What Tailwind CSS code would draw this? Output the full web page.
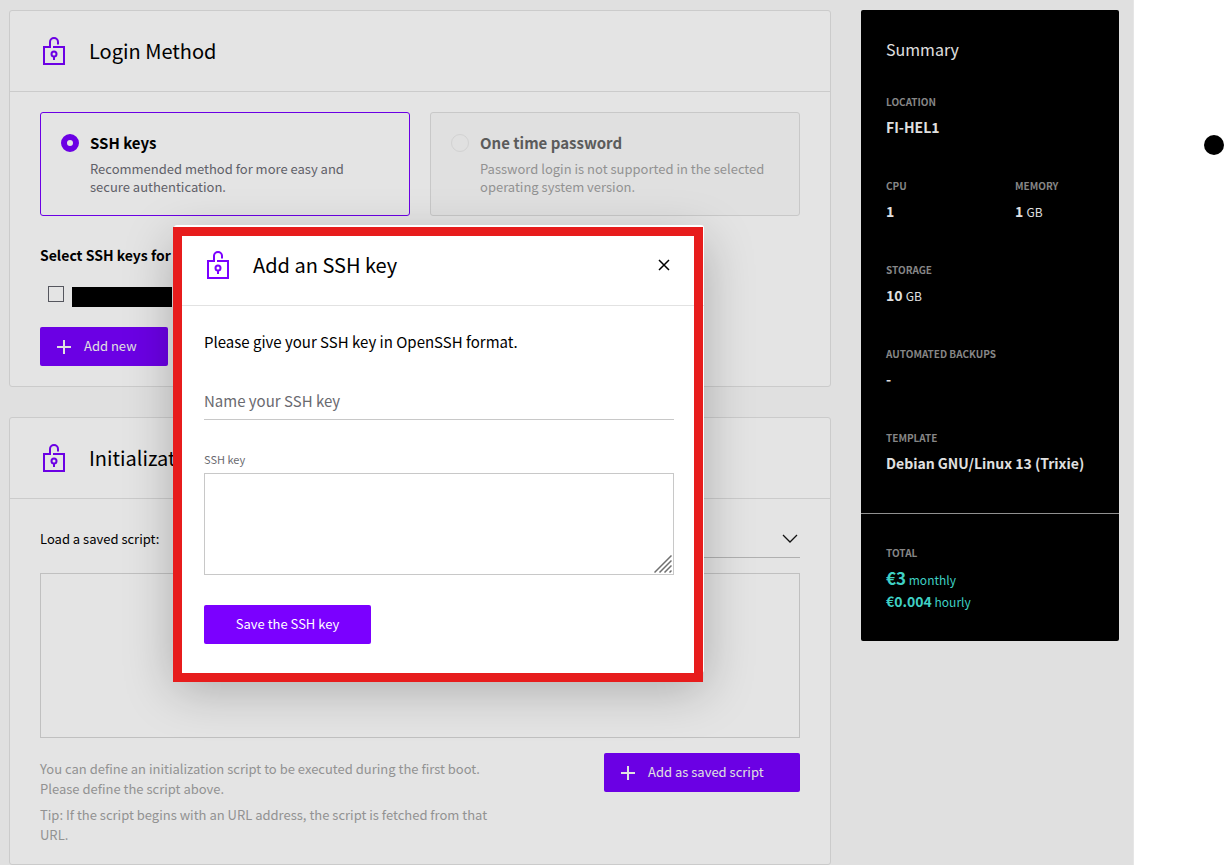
<!DOCTYPE html>
<html lang="en">
<head>
<meta charset="utf-8">
<meta name="viewport" content="width=device-width, initial-scale=1">
<title>Deploy server</title>
<script src="https://cdn.jsdelivr.net/npm/@tailwindcss/browser@4"></script>
</head>
<body class="bg-white font-['Noto_Sans_CJK_JP','Source_Sans_Pro',sans-serif] text-sm text-black">
<svg class="hidden" aria-hidden="true">
  <symbol id="lock" viewBox="0 0 24 30">
    <g fill="none" stroke="currentColor" stroke-width="2">
      <path d="M9 11H2V28H22V11H11"/>
      <path d="M8 11V6A4 4 0 0 1 16 6V8.500"/>
      <circle cx="12" cy="18" r="2.500"/>
      <path d="M12 20.500V24"/>
    </g>
  </symbol>
  <symbol id="plus" viewBox="0 0 14 14"><path d="M7 0V14M0 7H14" fill="none" stroke="currentColor" stroke-width="2"/></symbol>
</svg>
<div class="relative flex min-h-screen">
  <div class="flex flex-1 items-start gap-[30px] border-r border-[#e6e6e6] bg-[#e0e0e0] pt-[10px] pr-[14px] pl-[9px]">
    <main class="flex flex-1 flex-col gap-[30px]">
      <section class="rounded-[3px] border border-[#cbcbcb] bg-[#e4e4e4]">
        <header class="flex h-[81px] items-center gap-[23px] border-b border-[#cbcbcb] px-8">
          <svg class="h-[30px] w-6 text-[#6b00e4]"><use href="#lock"/></svg>
          <h2 class="text-xl leading-7">Login Method</h2>
        </header>
        <div class="flex flex-col px-[30px] py-5">
          <div class="grid grid-cols-2 gap-5">
            <label class="flex gap-[11px] rounded-[3px] border border-[#6b00e4] px-5 py-[19px]">
              <input type="radio" name="login" checked class="mt-[2px] size-[18px] shrink-0 appearance-none rounded-full border-[6px] border-[#6b00e4] bg-[#e4e4e4]">
              <span>
                <span class="block text-[15px] leading-[22px] font-bold">SSH keys</span>
                <span class="mt-[6px] block max-w-[280px] text-[13px] leading-[18px] text-[#5f6068]">Recommended method for more easy and secure authentication.</span>
              </span>
            </label>
            <label class="flex gap-[11px] rounded-[3px] border border-[#c8c8c8] bg-[#e0e0e0] px-5 py-[19px]">
              <input type="radio" name="login" disabled class="mt-[2px] size-[18px] shrink-0 appearance-none rounded-full border border-[#d2d2d2]">
              <span>
                <span class="block text-[15px] leading-[22px] font-bold text-[#5b5b5b]">One time password</span>
                <span class="mt-[6px] block text-[13px] leading-[18px] text-[#929292]">Password login is not supported in the selected operating system version.</span>
              </span>
            </label>
          </div>
          <h3 class="mt-[27px] text-sm leading-6 font-bold">Select SSH keys for</h3>
          <label class="mt-[15px] ml-2 flex h-6 items-center gap-2">
            <input type="checkbox" aria-label="SSH key" class="size-4 appearance-none border border-[#55565e]">
            <span class="mt-[6px] h-5 w-[100px] bg-black"></span>
          </label>
          <button class="mt-[21px] flex h-[39px] w-32 items-center gap-[13px] rounded-[2px] bg-[#6b00e4] pl-[17px] text-[13px] text-[#e0e0e0]"><svg class="size-[14px]"><use href="#plus"/></svg>Add new</button>
        </div>
      </section>

      <section class="rounded-[3px] border border-[#cbcbcb] bg-[#e4e4e4]">
        <header class="flex h-[81px] items-center gap-[23px] border-b border-[#cbcbcb] px-8">
          <svg class="h-[30px] w-6 text-[#6b00e4]"><use href="#lock"/></svg>
          <h2 class="text-xl leading-7">Initializat</h2>
        </header>
        <div class="flex flex-col px-[30px] pt-5 pb-[19px]">
          <div class="flex h-[39px] items-center gap-4">
            <label for="saved" class="pt-[2px] text-[13px]">Load a saved script:</label>
            <div class="relative h-full flex-1">
              <select id="saved" class="h-full w-full appearance-none border-b border-[#b0b0b0]"></select>
              <svg class="pointer-events-none absolute top-[15px] right-[2px] h-[9px] w-4" viewBox="0 0 16 9" fill="none" stroke="#111" stroke-width="1.300"><path d="M1 1L8 8L15 1"/></svg>
            </div>
          </div>
          <textarea aria-label="Initialization script" class="mt-[15px] h-[165px] w-full resize-none border border-[#c0c0c0]"></textarea>
          <div class="mt-[15px] flex items-start justify-between">
            <div class="w-[472px] pt-[6px] text-[13px] leading-5 text-[#929292]">
              <p>You can define an initialization script to be executed during the first boot. Please define the script above.</p>
              <p class="mt-[6px]">Tip: If the script begins with an URL address, the script is fetched from that URL.</p>
            </div>
            <button class="flex h-[39px] w-[196px] items-center gap-[13px] rounded-[2px] bg-[#6b00e4] pl-[17px] text-[13px] text-[#e0e0e0]"><svg class="size-[14px]"><use href="#plus"/></svg>Add as saved script</button>
          </div>
        </div>
      </section>
    </main>

    <aside class="w-[258px] shrink-0 rounded-[2px] bg-black text-[#e0e0e0]">
      <div class="px-[25px] pt-[27px] pb-[39px]">
        <h2 class="text-base leading-6">Summary</h2>
        <dl class="mt-[31px] grid grid-cols-[129px_1fr] gap-y-[38px]">
          <div class="col-span-2"><dt class="text-[10px] leading-5 font-bold text-[#868686]">LOCATION</dt><dd class="mt-1 text-sm leading-[22px] font-bold">FI-HEL1</dd></div>
          <div><dt class="text-[10px] leading-5 font-bold text-[#868686]">CPU</dt><dd class="mt-1 text-sm leading-[22px] font-bold">1</dd></div>
          <div><dt class="text-[10px] leading-5 font-bold text-[#868686]">MEMORY</dt><dd class="mt-1 text-sm leading-[22px] font-bold">1 <span class="text-xs font-normal">GB</span></dd></div>
          <div class="col-span-2"><dt class="text-[10px] leading-5 font-bold text-[#868686]">STORAGE</dt><dd class="mt-1 text-sm leading-[22px] font-bold">10 <span class="text-xs font-normal">GB</span></dd></div>
          <div class="col-span-2"><dt class="text-[10px] leading-5 font-bold text-[#868686]">AUTOMATED BACKUPS</dt><dd class="mt-1 text-sm leading-[22px] font-bold">-</dd></div>
          <div class="col-span-2"><dt class="text-[10px] leading-5 font-bold text-[#868686]">TEMPLATE</dt><dd class="mt-1 text-sm leading-[22px] font-bold whitespace-nowrap">Debian GNU/Linux 13 (Trixie)</dd></div>
        </dl>
      </div>
      <div class="border-t border-[#909090] px-[25px] pt-[29px] pb-[29px]">
        <h3 class="text-[10px] leading-5 font-bold text-[#868686]">TOTAL</h3>
        <p class="mt-1 text-xs leading-[22px] text-[#3fd0c4]"><b class="text-[17px] leading-[22px]">€3</b> monthly</p>
        <p class="text-xs leading-5 text-[#3fd0c4]"><b class="text-sm leading-5">€0.004</b> hourly</p>
      </div>
    </aside>
  </div>
  <div class="flex w-[90px] shrink-0 justify-end pt-[135px]"><span class="size-5 rounded-full bg-black"></span></div>

  <div role="dialog" aria-labelledby="dlg" class="absolute top-[225px] left-[174px] w-[530px] rounded-[3px] bg-white shadow-[0_16px_50px_rgba(0,0,0,0.25)]">
    <header class="flex h-[81px] items-center border-b border-[#e2e2e2] px-8">
      <svg class="h-[30px] w-6 text-[#7b00ff]"><use href="#lock"/></svg>
      <h2 id="dlg" class="ml-[23px] flex-1 text-xl leading-7">Add an SSH key</h2>
      <button aria-label="Close" class="p-[2px]"><svg class="size-3" viewBox="0 0 12 12" fill="none" stroke="#000" stroke-width="1.500"><path d="M1 1L11 11M11 1L1 11"/></svg></button>
    </header>
    <form class="px-[30px] pt-6 pb-[29px]">
      <p class="text-[15px] leading-6">Please give your SSH key in OpenSSH format.</p>
      <input type="text" placeholder="Name your SSH key" aria-label="Name your SSH key" class="mt-7 block h-[38px] w-full border-b border-[#c8c8c8] text-[15px] placeholder:text-[#6a6a70]">
      <label for="key" class="mt-[30px] block text-[11px] leading-[18px] text-[#6a6a70]">SSH key</label>
      <div class="relative mt-[5px]">
        <textarea id="key" class="block h-[102px] w-full resize-none border border-[#c8c8c8]"></textarea>
        <svg class="pointer-events-none absolute right-[2px] bottom-[2px] size-[18px]" viewBox="0 0 18 18" fill="none" stroke="#707070" stroke-width="1.500"><path d="M.5 17.500L17.500 .5M5.500 17.500L17.500 5.500M10.500 17.500L17.500 10.500M15.500 17.500L17.500 15.500"/></svg>
      </div>
      <button type="button" class="mt-[30px] h-[39px] w-[167px] rounded-[2px] bg-[#7b00ff] text-[13px] text-white">Save the SSH key</button>
    </form>
    <div class="pointer-events-none absolute top-[2px] right-px -bottom-[9px] -left-px border-[9px] border-[#e71c1c]"></div>
  </div>
</div>
</body>
</html>
